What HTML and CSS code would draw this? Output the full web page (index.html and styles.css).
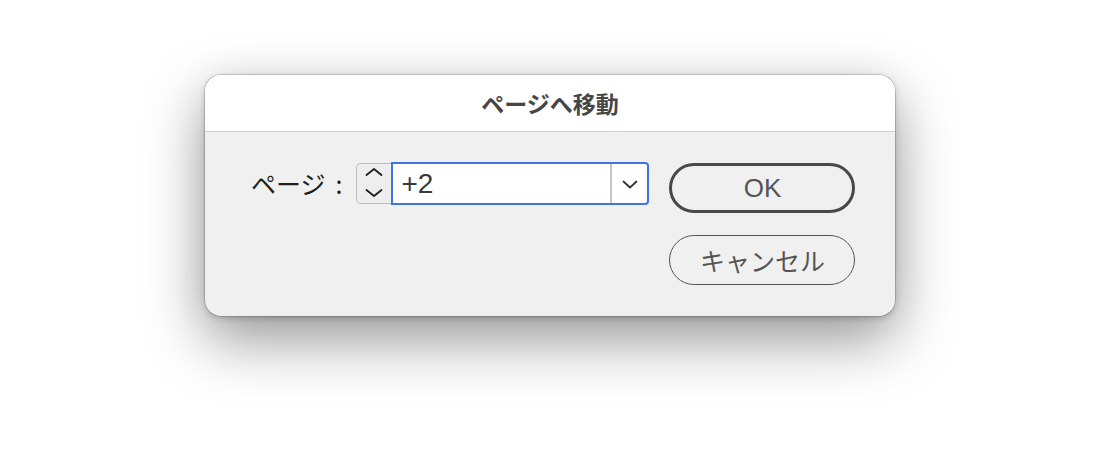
FILE: index.html
```html
<!DOCTYPE html>
<html lang="ja">
<head>
<meta charset="utf-8">
<link rel="stylesheet" href="styles.css">
</head>
<body>
<div class="page">
  <div class="dialog">
    <div class="titlebar">ページへ移動</div>
    <div class="body">
      <div class="row">
        <span class="label">ページ<span class="colon">:</span></span>
        <div class="stepper">
          <svg width="20" height="39" viewBox="0 0 20 39"><path d="M2.5 11 L10 5 L17.5 11" fill="none" stroke="#222" stroke-width="1.9" stroke-linecap="round" stroke-linejoin="round"/><path d="M2.5 26 L10 32 L17.5 26" fill="none" stroke="#222" stroke-width="1.9" stroke-linecap="round" stroke-linejoin="round"/></svg>
        </div>
        <div class="combo">
          <span class="value">+2</span>
          <span class="drop"><svg width="16" height="9" viewBox="0 0 16 9"><path d="M1.5 1.5 L8 7.5 L14.5 1.5" fill="none" stroke="#333" stroke-width="1.8" stroke-linecap="round" stroke-linejoin="round"/></svg></span>
        </div>
      </div>
      <div class="buttons">
        <div class="btn btn-ok">OK</div>
        <div class="btn btn-cancel">キャンセル</div>
      </div>
    </div>
  </div>
</div>
</body>
</html>
```
FILE: styles.css
```css
html, body {
  margin: 0;
  padding: 0;
  background: #ffffff;
  font-family: "Noto Sans CJK JP", "Noto Sans", sans-serif;
}
.page {
  width: 1100px;
  height: 464px;
  display: flex;
  justify-content: center;
  padding-top: 75px;
  box-sizing: border-box;
  overflow: hidden;
}
.dialog {
  width: 690px;
  height: 241px;
  border-radius: 16px;
  overflow: hidden;
  background: #f0f0f0;
  box-shadow: 0 0 0 0.5px rgba(0,0,0,0.3), 0 2px 6px rgba(0,0,0,0.18), 0 24px 60px rgba(0,0,0,0.40), 0 0 40px rgba(0,0,0,0.05);
  display: flex;
  flex-direction: column;
}
.titlebar {
  height: 57px;
  flex: none;
  background: #ffffff;
  border-bottom: 1px solid #d2d2d2;
  display: flex;
  align-items: center;
  justify-content: center;
  font-weight: 700;
  font-size: 23px;
  color: #464646;
  box-sizing: border-box;
}
.body {
  flex: 1;
  display: flex;
  padding: 30px 0 0 46px;
  box-sizing: border-box;
}
.row {
  display: flex;
  align-items: flex-start;
  height: 43px;
  flex: none;
}
.label {
  display: flex;
  flex: none;
  white-space: nowrap;
  font-family: "Noto Sans CJK JP", sans-serif;
  font-size: 25px;
  color: #1e1e1e;
  line-height: 43px;
  margin-right: 14px;
}
.colon {
  margin-left: 10px;
}
.stepper {
  flex: none;
  width: 35px;
  height: 41px;
  margin-top: 1px;
  box-sizing: border-box;
  border: 1px solid #bdbdbd;
  border-right: none;
  border-radius: 5px 0 0 5px;
  background: #eeeeee;
  display: flex;
  align-items: center;
  justify-content: center;
}
.combo {
  flex: none;
  width: 258px;
  height: 43px;
  box-sizing: border-box;
  border: 2px solid #3e73e0;
  border-radius: 0 4px 4px 0;
  background: #ffffff;
  display: flex;
  align-items: stretch;
}
.value {
  flex: 1;
  font-family: "Liberation Sans", "Noto Sans", sans-serif;
  font-size: 28px;
  color: #3a3a3a;
  line-height: 40px;
  padding-left: 8px;
}
.drop {
  width: 35px;
  border-left: 2px solid #c4c4c4;
  display: flex;
  align-items: center;
  justify-content: center;
  padding-top: 1px;
}
.buttons {
  flex: none;
  margin-left: 20px;
  display: flex;
  flex-direction: column;
  gap: 22px;
  margin-top: 1px;
}
.btn {
  width: 186px;
  height: 50px;
  box-sizing: border-box;
  border-radius: 25px;
  display: flex;
  align-items: center;
  justify-content: center;
  color: #555;
  background: transparent;
}
.btn-ok {
  border: 3px solid #484848;
  font-family: "Liberation Sans", "Noto Sans", sans-serif;
  font-size: 26px;
}
.btn-cancel {
  border: 1.5px solid #555;
  font-family: "Noto Sans CJK JP", sans-serif;
  font-size: 25px;
}
```
